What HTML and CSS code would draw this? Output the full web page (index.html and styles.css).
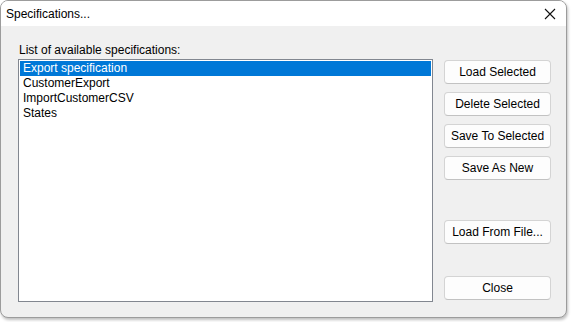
FILE: index.html
```html
<!DOCTYPE html>
<html>
<head>
<meta charset="utf-8">
<link rel="stylesheet" href="styles.css">
</head>
<body>
<div class="window">
  <div class="titlebar">
    <span class="title">Specifications...</span>
    <svg class="close" width="12" height="12" viewBox="0 0 12 12"><path d="M1 1L11 11M11 1L1 11" stroke="#111" stroke-width="1.1" fill="none"/></svg>
  </div>
  <div class="content">
    <div class="left">
      <div class="label">List of available specifications:</div>
      <div class="listbox">
        <div class="item selected">Export specification</div>
        <div class="item">CustomerExport</div>
        <div class="item">ImportCustomerCSV</div>
        <div class="item">States</div>
      </div>
    </div>
    <div class="buttons">
      <button class="btn">Load Selected</button>
      <button class="btn">Delete Selected</button>
      <button class="btn">Save To Selected</button>
      <button class="btn">Save As New</button>
      <button class="btn gap-large">Load From File...</button>
      <button class="btn gap-close">Close</button>
    </div>
  </div>
</div>
</body>
</html>
```

FILE: styles.css
```css
html, body {
  margin: 0;
  padding: 0;
  background: #ffffff;
}
body {
  width: 571px;
  height: 322px;
  font-family: "Liberation Sans", Arial, sans-serif;
  font-size: 12px;
  color: #000;
}
.window {
  box-sizing: border-box;
  width: 567px;
  height: 318px;
  border: 1px solid #9c9c9c;
  border-radius: 8px;
  overflow: hidden;
  background: #f0f0f0;
  box-shadow: 1px 2px 3px rgba(0,0,0,0.25);
  display: flex;
  flex-direction: column;
}
.titlebar {
  height: 25px;
  background: #ffffff;
  display: flex;
  align-items: center;
  justify-content: space-between;
  padding: 0 10px 0 5px;
  flex-shrink: 0;
}
.title {
  font-size: 12px;
  margin-top: 1px;
}
.close {
  display: block;
  margin-top: 1px;
}
.content {
  display: flex;
  padding: 17px 0 0 17px;
  gap: 11px;
}
.left {
  display: flex;
  flex-direction: column;
}
.label {
  line-height: 15px;
  height: 15px;
  padding-left: 1px;
  margin-bottom: 1px;
}
.listbox {
  box-sizing: border-box;
  width: 415px;
  height: 243px;
  background: #fff;
  border: 1px solid #828790;
  padding: 1px;
}
.item {
  height: 15px;
  line-height: 15px;
  padding-left: 3px;
}
.item.selected {
  background: #0078d7;
  color: #fff;
}
.buttons {
  display: flex;
  flex-direction: column;
  gap: 8px;
  padding-top: 17px;
}
.btn {
  box-sizing: border-box;
  width: 107px;
  height: 24px;
  background: #fdfdfd;
  border: 1px solid #d4d4d4;
  border-bottom-color: #c2c2c2;
  border-radius: 4px;
  font-family: "Liberation Sans", Arial, sans-serif;
  font-size: 12px;
  color: #000;
  padding: 0;
}
.gap-large {
  margin-top: 32px;
}
.gap-close {
  margin-top: 24px;
}
```
